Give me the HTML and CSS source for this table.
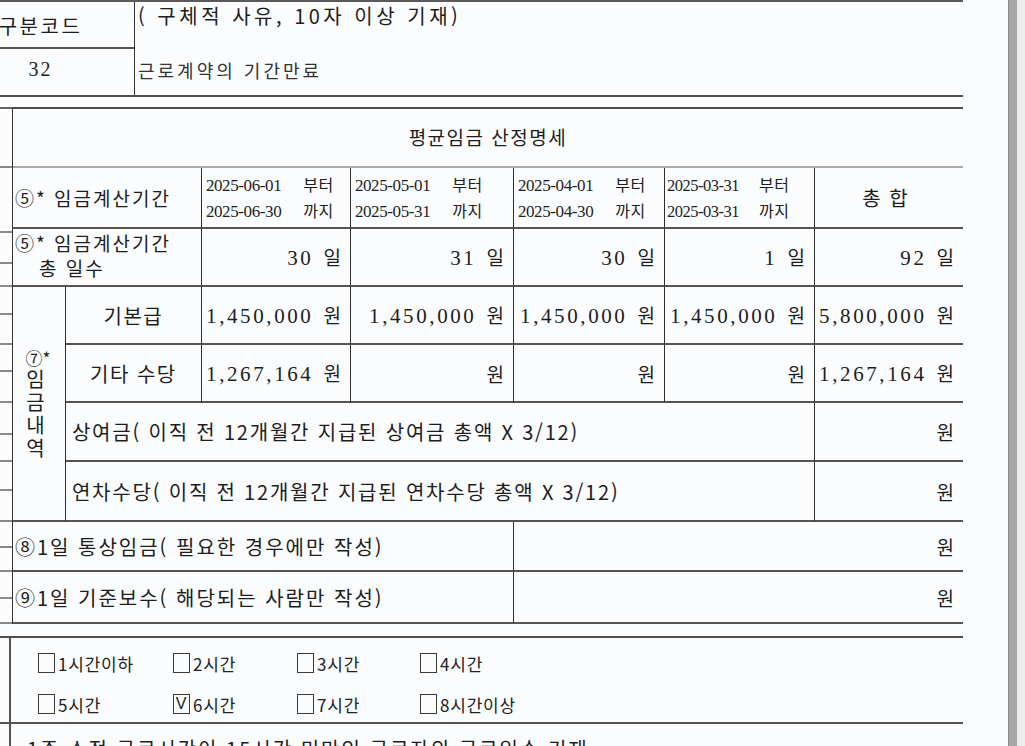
FILE: index.html
```html
<!DOCTYPE html>
<html lang="ko">
<head>
<meta charset="utf-8">
<title>이직확인서 - 평균임금 산정명세</title>
<link rel="stylesheet" href="styles.css">
</head>
<body>
<div class="viewport">
  <div class="sheet">
    <div class="form">
      <section class="reason">
        <div class="code-col">
          <div class="code-head">구분코드</div>
          <div class="code-val">32</div>
        </div>
        <div class="reason-col">
          <div class="reason-hint">( 구체적 사유, 10자 이상 기재)</div>
          <div class="reason-text">근로계약의 기간만료</div>
        </div>
      </section>

      <section class="wage">
        <div class="ticks">
          <span></span><span></span><span></span><span></span><span></span><span></span><span></span><span></span>
          <span></span><span></span><span></span><span></span><span></span><span></span><span></span><span></span>
        </div>
        <table class="wage-table">
          <colgroup>
            <col class="c-a"><col class="c-b"><col class="c-1"><col class="c-2"><col class="c-3"><col class="c-4"><col class="c-t">
          </colgroup>
          <tr class="r-title">
            <td colspan="7" class="title">평균임금 산정명세</td>
          </tr>
          <tr class="r-period">
            <td colspan="2" class="label">⑤* 임금계산기간</td>
            <td class="period"><div><span class="date">2025-06-01</span><span class="word">부터</span></div><div><span class="date">2025-06-30</span><span class="word">까지</span></div></td>
            <td class="period"><div><span class="date">2025-05-01</span><span class="word">부터</span></div><div><span class="date">2025-05-31</span><span class="word">까지</span></div></td>
            <td class="period"><div><span class="date">2025-04-01</span><span class="word">부터</span></div><div><span class="date">2025-04-30</span><span class="word">까지</span></div></td>
            <td class="period narrow"><div><span class="date">2025-03-31</span><span class="word">부터</span></div><div><span class="date">2025-03-31</span><span class="word">까지</span></div></td>
            <td class="sum-head">총 합</td>
          </tr>
          <tr class="r-days">
            <td colspan="2" class="label two-line"><div>⑤* 임금계산기간</div><div class="indent">총 일수</div></td>
            <td class="num"><span class="amt">30</span><span class="unit">일</span></td>
            <td class="num"><span class="amt">31</span><span class="unit">일</span></td>
            <td class="num"><span class="amt">30</span><span class="unit">일</span></td>
            <td class="num"><span class="amt">1</span><span class="unit">일</span></td>
            <td class="num"><span class="amt">92</span><span class="unit">일</span></td>
          </tr>
          <tr class="r-base">
            <td rowspan="4" class="vlabel"><div class="mark">⑦*</div><div class="vtext">임금내역</div></td>
            <td class="item">기본급</td>
            <td class="num"><span class="amt">1,450,000</span><span class="unit">원</span></td>
            <td class="num"><span class="amt">1,450,000</span><span class="unit">원</span></td>
            <td class="num"><span class="amt">1,450,000</span><span class="unit">원</span></td>
            <td class="num"><span class="amt">1,450,000</span><span class="unit">원</span></td>
            <td class="num"><span class="amt">5,800,000</span><span class="unit">원</span></td>
          </tr>
          <tr class="r-extra">
            <td class="item">기타 수당</td>
            <td class="num"><span class="amt">1,267,164</span><span class="unit">원</span></td>
            <td class="num"><span class="unit">원</span></td>
            <td class="num"><span class="unit">원</span></td>
            <td class="num"><span class="unit">원</span></td>
            <td class="num"><span class="amt">1,267,164</span><span class="unit">원</span></td>
          </tr>
          <tr class="r-bonus">
            <td colspan="5" class="desc">상여금( 이직 전 12개월간 지급된 상여금 총액 X 3/12)</td>
            <td class="num"><span class="unit">원</span></td>
          </tr>
          <tr class="r-annual">
            <td colspan="5" class="desc">연차수당( 이직 전 12개월간 지급된 연차수당 총액 X 3/12)</td>
            <td class="num"><span class="unit">원</span></td>
          </tr>
          <tr class="r-daily">
            <td colspan="4" class="desc wide">⑧1일 통상임금( 필요한 경우에만 작성)</td>
            <td colspan="3" class="num"><span class="unit">원</span></td>
          </tr>
          <tr class="r-std">
            <td colspan="4" class="desc wide">⑨1일 기준보수( 해당되는 사람만 작성)</td>
            <td colspan="3" class="num"><span class="unit">원</span></td>
          </tr>
        </table>
      </section>

      <section class="hours">
        <div class="side"></div>
        <div class="hours-grid">
          <div class="opt"><span class="box"></span>1시간이하</div>
          <div class="opt"><span class="box"></span>2시간</div>
          <div class="opt"><span class="box"></span>3시간</div>
          <div class="opt"><span class="box"></span>4시간</div>
          <div class="opt"><span class="box"></span>5시간</div>
          <div class="opt"><span class="box checked">V</span>6시간</div>
          <div class="opt"><span class="box"></span>7시간</div>
          <div class="opt"><span class="box"></span>8시간이상</div>
        </div>
      </section>

      <section class="next">
        <div class="side"></div>
        <div class="next-text">1주 소정 근로시간이 15시간 미만인 근로자의 근로일수 기재</div>
      </section>
    </div>
  </div>
  <div class="scrollbar"></div>
  <div class="edge"></div>
</div>
</body>
</html>
```

FILE: styles.css
```css
* { box-sizing: border-box; }

html, body {
  margin: 0;
  padding: 0;
}

body {
  width: 1025px;
  height: 746px;
  overflow: hidden;
  background: #fbfcfe;
  color: #1d1d1d;
  font-family: "Noto Sans CJK KR", "Noto Sans", sans-serif;
}

.viewport {
  display: flex;
  height: 746px;
}

.sheet {
  width: 1008px;
  overflow: hidden;
}

.form {
  width: 963px;
}

.scrollbar {
  width: 9px;
  background: #a7a7a7;
  border-left: 1px solid #8d8d8d;
}

.edge {
  flex: 1;
  background: #ededed;
}

/* ---------- reason (top) ---------- */
.reason {
  display: flex;
  height: 97px;
  border-top: 2px solid #5a5a5a;
  border-bottom: 2px solid #4e4e4e;
  margin-bottom: 10px;
}

.code-col {
  width: 188px;
  margin-left: -53px;
  border-right: 1px solid #333;
  display: flex;
  flex-direction: column;
}

.code-head {
  height: 47px;
  border-bottom: 2px solid #555;
  display: flex;
  align-items: center;
  justify-content: center;
  font-size: 20px;
  letter-spacing: 2.5px;
  padding-top: 2px;
}

.code-val {
  flex: 1;
  display: flex;
  align-items: center;
  justify-content: center;
  padding-bottom: 6px;
  font-family: "Liberation Serif", serif;
  font-size: 20px;
  letter-spacing: 2px;
}

.reason-col {
  flex: 1;
  padding-left: 3px;
}

.reason-hint {
  font-size: 20px;
  letter-spacing: 3.5px;
  line-height: 24px;
  padding-top: 2px;
}

.reason-text {
  margin-top: 31px;
  font-size: 18px;
  letter-spacing: 3px;
  line-height: 22px;
  color: #333;
}

/* ---------- wage table ---------- */
.wage {
  display: flex;
}

.ticks {
  width: 12px;
  border-top: 2px solid #666;
  display: flex;
  flex-direction: column;
}

.ticks span {
  flex: none;
  border-bottom: 2px solid #8a8a8a;
}

.ticks span:nth-child(1) { height: 59px; }
.ticks span:nth-child(2) { height: 65px; }
.ticks span:nth-child(3) { height: 31px; }
.ticks span:nth-child(4) { height: 23px; }
.ticks span:nth-child(5) { height: 28px; }
.ticks span:nth-child(6) { height: 30px; }
.ticks span:nth-child(7) { height: 27px; }
.ticks span:nth-child(8) { height: 31px; }
.ticks span:nth-child(9) { height: 32px; }
.ticks span:nth-child(10) { height: 27px; }
.ticks span:nth-child(11) { height: 29px; }
.ticks span:nth-child(12) { height: 31px; }
.ticks span:nth-child(13) { height: 26px; }
.ticks span:nth-child(14) { height: 24px; }
.ticks span:nth-child(15) { height: 27px; }
.ticks span:nth-child(16) { height: 25px; }

.wage-table {
  width: 951px;
  table-layout: fixed;
  border-collapse: separate;
  border-spacing: 0;
  border-top: 2px solid #4f4f4f;
  border-left: 1px solid #333;
}

.c-a { width: 53px; }
.c-b { width: 136px; }
.c-1 { width: 149px; }
.c-2 { width: 163px; }
.c-3 { width: 151px; }
.c-4 { width: 150px; }
.c-t { width: 148px; }

.wage-table td {
  padding: 0;
  border-right: 1px solid #2e2e2e;
  border-bottom: 2px solid #555;
  vertical-align: middle;
}

.wage-table td:last-child {
  border-right: 0;
}

.r-title { height: 59px; }
.r-period { height: 61px; }
.r-days { height: 58px; }
.r-base { height: 58px; }
.r-extra { height: 58px; }
.r-bonus { height: 59px; }
.r-annual { height: 60px; }
.r-daily { height: 50px; }
.r-std { height: 52px; }

.title {
  text-align: center;
  font-size: 19px;
  letter-spacing: 1.5px;
  border-bottom-color: #a9a9a9 !important;
  padding-bottom: 3px !important;
}

.label {
  font-size: 19px;
  letter-spacing: 2px;
  padding-left: 2px !important;
  line-height: 25px;
}

.label.two-line {
  vertical-align: top;
  padding-top: 1px !important;
}

.label .indent {
  padding-left: 24px;
}

.period {
  line-height: 24px;
  padding-left: 4px !important;
}

.period div {
  white-space: nowrap;
}

.date {
  font-family: "Liberation Serif", serif;
  font-size: 17px;
  letter-spacing: -0.4px;
}

.word {
  font-size: 16px;
  letter-spacing: 0.5px;
  margin-left: 22px;
}

.period.narrow {
  padding-left: 2px !important;
}

.period.narrow .date {
  font-size: 16.5px;
  letter-spacing: -0.5px;
}

.period.narrow .word {
  margin-left: 20px;
}

.sum-head {
  text-align: center;
  font-size: 20px;
  word-spacing: 3px;
  padding-right: 8px !important;
}

.num {
  text-align: right;
  padding-right: 9px !important;
  white-space: nowrap;
}

.amt {
  font-family: "Liberation Serif", serif;
  font-size: 21px;
  letter-spacing: 2.6px;
}

.unit {
  font-size: 19px;
  margin-left: 10px;
}

.vlabel {
  text-align: center;
  padding-right: 8px !important;
}

.vlabel .mark {
  font-size: 17px;
  line-height: 22px;
  padding-left: 6px;
}

.vtext {
  writing-mode: vertical-rl;
  text-orientation: upright;
  font-size: 20px;
  letter-spacing: 3px;
  line-height: 24px;
  margin: 0 auto;
}

.item {
  text-align: center;
  font-size: 20px;
  letter-spacing: 1.5px;
}

.desc {
  font-size: 20px;
  letter-spacing: 1.8px;
  padding-left: 6px !important;
}

.desc.wide {
  padding-left: 2px !important;
  letter-spacing: 2px;
}

/* ---------- working hours ---------- */
.hours {
  display: flex;
  height: 88px;
  margin-top: 12px;
  border-top: 2px solid #4e4e4e;
  border-bottom: 2px solid #555;
}

.side {
  width: 11px;
  border-right: 2px solid #555;
}

.hours-grid {
  display: grid;
  grid-template-columns: 135px 124px 123px auto;
  grid-template-rows: 42px 40px;
  padding-left: 27px;
  padding-top: 4px;
}

.opt {
  display: flex;
  align-items: center;
  font-size: 17px;
  letter-spacing: 0.8px;
  color: #222;
}

.box {
  width: 17px;
  height: 20px;
  border: 1px solid #3a3a3a;
  margin-right: 3px;
  display: flex;
  align-items: center;
  justify-content: center;
  font-family: "Liberation Sans", sans-serif;
  font-size: 16px;
  line-height: 1;
}

/* ---------- next row (cut off) ---------- */
.next {
  display: flex;
  height: 40px;
}

.next-text {
  padding-left: 16px;
  padding-top: 10px;
  font-size: 20px;
  letter-spacing: 2px;
  line-height: 30px;
  white-space: nowrap;
}
```
